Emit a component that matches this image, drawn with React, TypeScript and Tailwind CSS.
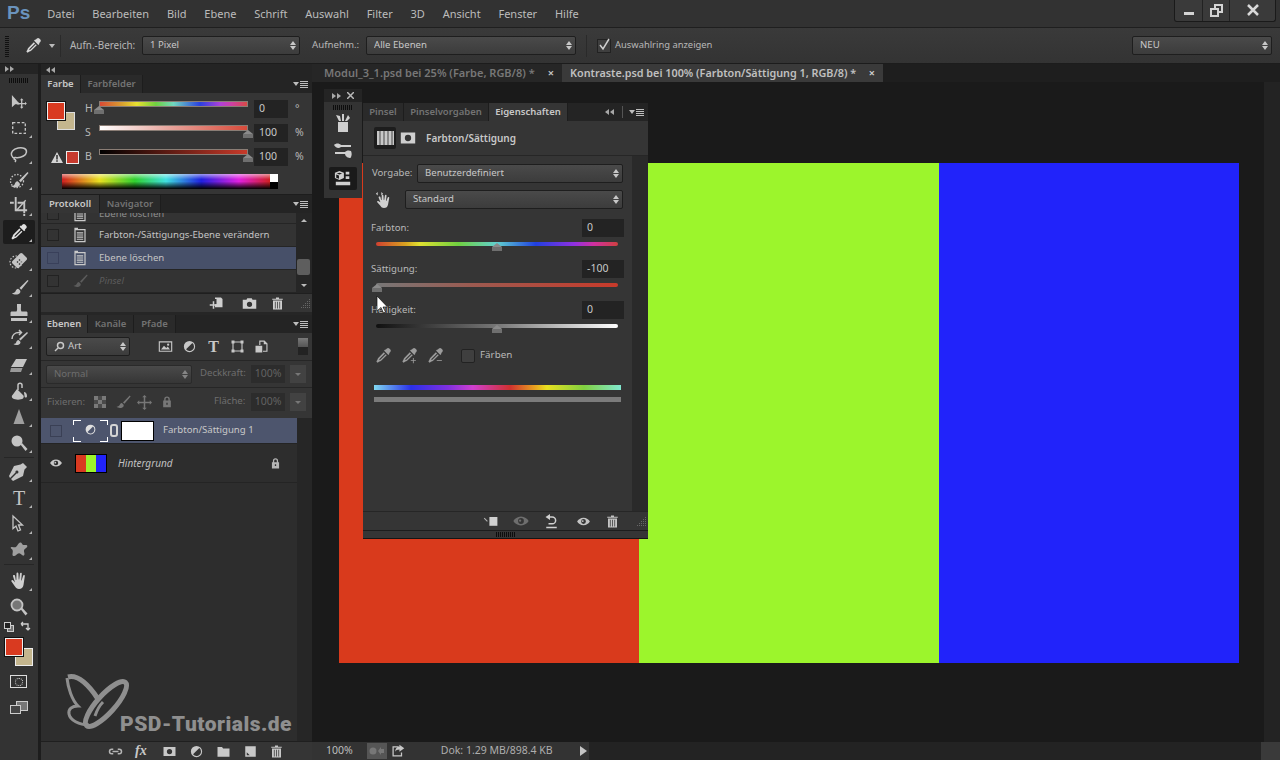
import type { ReactNode } from "react";

const menuItems = ["Datei", "Bearbeiten", "Bild", "Ebene", "Schrift", "Auswahl", "Filter", "3D", "Ansicht", "Fenster", "Hilfe"];

const Icon = ({ size = 20, className = "text-[#c4c4c4]", children }: { size?: number; className?: string; children: ReactNode }) => (
  <svg width={size} height={size} viewBox="0 0 20 20" fill="currentColor" className={`shrink-0 ${className}`}>
    {children}
  </svg>
);

const DropperPath = () => (
  <>
    <path d="M12.5 3.2 14 1.8c.9-.8 2-.8 2.8 0l1.2 1.2c.8.8.8 1.9 0 2.8l-1.5 1.5.6.6-1.4 1.4-5.1-5.1 1.4-1.4z" />
    <path d="M10.4 6.2 3.8 12.8c-.6.6-.8 1.3-.8 2L1.6 17l1.4 1.4 2.2-1.4c.7 0 1.4-.2 2-.8l6.6-6.6-1.1-1.1-6.5 6.5-1.2.3.3-1.2 6.5-6.5z" />
  </>
);
const BrushPath = () => (
  <>
    <path d="M18.5 2 10 10.5l1.8 1.8L19.5 3z" />
    <path d="M8.6 11.2c-1.7.2-2.4 1.4-2.8 2.7-.4 1.1-1.4 1.9-3.8 2.1 1.6 1.7 6.4 2.3 8.4-.2.8-1 .7-2.2-.2-3.1z" />
  </>
);
const TrashPath = () => (
  <path fillRule="evenodd" d="M8 2h4v1.5h5V5H3V3.500h5zM4 6h12v12H4zm2.500 1.500v9h1v-9zm3 0v9h1v-9zm3 0v9h1v-9z" />
);
const EyePath = () => (
  <path fillRule="evenodd" d="M10 5c4 0 7 2.500 8.500 5-1.500 2.500-4.500 5-8.500 5s-7-2.500-8.500-5C3 7.500 6 5 10 5zm0 1.800a3.200 3.200 0 1 0 0 6.400 3.200 3.200 0 0 0 0-6.400zm-1 1.400a1.300 1.300 0 1 1 0 2.600 1.300 1.300 0 0 1 0-2.600z" />
);
const LockPath = () => (
  <path fillRule="evenodd" d="M10 2a4 4 0 0 1 4 4v2h1.500v9.500h-11V8H6V6a4 4 0 0 1 4-4zm0 2a2 2 0 0 0-2 2v2h4V6a2 2 0 0 0-2-2zm-1 7v3h2v-3z" />
);
const AdjustPath = () => (
  <path fillRule="evenodd" d="M10 2.500a7.500 7.500 0 1 1 0 15 7.500 7.500 0 0 1 0-15zm3.800 2.900L5.400 13.800A6 6 0 0 0 16 10a6 6 0 0 0-2.200-4.600z" />
);
const MaskPath = () => <path fillRule="evenodd" d="M2 4h16v12H2zm8 2.500a3.500 3.500 0 1 0 0 7 3.500 3.500 0 0 0 0-7z" />;
const DocPath = () => (
  <path fillRule="evenodd" d="M3 1h4.500v1.500H17V19H3zm1.500 3v13.500h11V4zM6 6.500h8V8H6zm0 2.800h8v1.300H6zm0 2.700h8v1.300H6zm0 2.700h8V16H6z" />
);

const Tool = ({ children, active, corner = true, h = "h-[26px]" }: { children: ReactNode; active?: boolean; corner?: boolean; h?: string }) => (
  <div className={`relative flex w-full items-center justify-center ${h}`}>
    <div className={`flex h-[24px] w-[32px] items-center justify-center rounded-[2px] ${active ? "bg-[#1d1d1d]" : ""}`}>{children}</div>
    {corner && <span className="absolute bottom-[3px] right-[6px] h-0 w-0 border-b-[3px] border-l-[3px] border-b-[#b5b5b5] border-l-transparent" />}
  </div>
);

const Select = ({ label, className, dim, labelClass = "" }: { label: ReactNode; className: string; dim?: boolean; labelClass?: string }) => (
  <div className={`flex h-[19px] items-center justify-between rounded-[2px] border border-[#1e1e1e] bg-gradient-to-b from-[#4a4a4a] to-[#3c3c3c] pl-[7px] pr-[3px] text-[9.600px] ${dim ? "border-[#2a2a2a] from-[#3b3b3b] to-[#363636] text-[#6e6e6e]" : "text-[#c8c8c8]"} ${className}`}>
    <span className={`truncate ${labelClass}`}>{label}</span>
    <span className={`flex flex-col gap-[1px] ${dim ? "opacity-50" : ""}`}>
      <span className="h-0 w-0 border-x-[3px] border-b-[4px] border-x-transparent border-b-[#c8c8c8]" />
      <span className="h-0 w-0 border-x-[3px] border-t-[4px] border-x-transparent border-t-[#c8c8c8]" />
    </span>
  </div>
);

const Tab = ({ label, active, w }: { label: string; active?: boolean; w: string }) => (
  <div className={`flex h-full items-center justify-center border-r border-[#1d1d1d] text-[9.5px] font-semibold ${w} ${active ? "bg-[#353535] text-[#c8c8c8]" : "bg-[#2a2a2a] text-[#737373]"}`}>{label}</div>
);

const PanelMenu = () => (
  <div className="ml-auto flex items-center gap-[1px] pr-[4px]">
    <span className="h-0 w-0 border-x-[3px] border-t-[4px] border-x-transparent border-t-[#bdbdbd]" />
    <span className="flex flex-col gap-[1px]">
      <span className="h-[1px] w-[8px] bg-[#bdbdbd]" />
      <span className="h-[1px] w-[8px] bg-[#bdbdbd]" />
      <span className="h-[1px] w-[8px] bg-[#bdbdbd]" />
      <span className="h-[1px] w-[8px] bg-[#bdbdbd]" />
    </span>
  </div>
);

const Grip = ({ className = "" }: { className?: string }) => (
  <div className={`h-[5px] bg-[repeating-linear-gradient(90deg,#0d0d0d_0_1px,transparent_1px_2px)] ${className}`} />
);

const Corner = () => (
  <svg width="11" height="11" viewBox="0 0 11 11" fill="#666666">
    <rect x="9" y="1" width="1" height="1" />
    <rect x="7" y="3" width="1" height="1" /><rect x="9" y="3" width="1" height="1" />
    <rect x="5" y="5" width="1" height="1" /><rect x="7" y="5" width="1" height="1" /><rect x="9" y="5" width="1" height="1" />
    <rect x="3" y="7" width="1" height="1" /><rect x="5" y="7" width="1" height="1" /><rect x="7" y="7" width="1" height="1" /><rect x="9" y="7" width="1" height="1" />
    <rect x="1" y="9" width="1" height="1" /><rect x="3" y="9" width="1" height="1" /><rect x="5" y="9" width="1" height="1" /><rect x="7" y="9" width="1" height="1" /><rect x="9" y="9" width="1" height="1" />
  </svg>
);

const DoubleArrow = ({ left }: { left?: boolean }) => (
  <span className={`flex gap-[1px] ${left ? "rotate-180" : ""}`}>
    <span className="h-0 w-0 border-y-[3px] border-l-[4px] border-y-transparent border-l-[#a8a8a8]" />
    <span className="h-0 w-0 border-y-[3px] border-l-[4px] border-y-transparent border-l-[#a8a8a8]" />
  </span>
);

const Thumb = ({ className }: { className: string }) => (
  <span className={`absolute top-[6px] flex -translate-x-1/2 flex-col items-center ${className}`}>
    <span className="h-0 w-0 border-x-[5px] border-b-[4px] border-x-transparent border-b-[#8a8a8a]" />
    <span className="h-[4px] w-[10px] bg-[#6f6f6f]" />
  </span>
);

const ValueBox = ({ value, className }: { value: string; className: string }) => (
  <div className={`flex h-[18px] items-center bg-[#232323] pl-[5px] text-[#c8c8c8] ${className}`}>{value}</div>
);

const ColorRow = ({ label, bar, thumb, value, unit }: { label: string; bar: string; thumb: string; value: string; unit: string }) => (
  <div className="flex h-[24px] items-start">
    <span className="mt-[1px] w-[14px] text-[#b8b8b8]">{label}</span>
    <div className="relative h-[18px] w-[149px]">
      <div className={`mt-[1px] h-[6px] w-full border border-[#8a7d75] ${bar}`} />
      <Thumb className={thumb} />
    </div>
    <ValueBox value={value} className="ml-[6px] w-[34px]" />
    <span className="ml-[7px] mt-[1px] text-[#b8b8b8]">{unit}</span>
  </div>
);

const HistoryRow = ({ label, selected, dim, icon }: { label: string; selected?: boolean; dim?: boolean; icon?: ReactNode }) => (
  <div className={`flex h-[23px] items-center border-b border-[#252525] pl-[6px] text-[9.600px] ${selected ? "bg-[#475069]" : ""}`}>
    <span className={`h-[12px] w-[12px] border ${selected ? "border-[#39405a]" : "border-[#222]"}`} />
    <span className="ml-[13px] flex w-[27px]">{icon ?? <Icon size={16} className="text-[#c9c9c9]"><DocPath /></Icon>}</span>
    <span className={dim ? "italic text-[#5b5b5b]" : "text-[#c4c4c4]"}>{label}</span>
  </div>
);

const PropSlider = ({ label, value, bar, thumb }: { label: string; value: string; bar: string; thumb: string }) => (
  <div className="flex flex-col">
    <div className="flex h-[18px] items-center justify-between pl-[8px] pr-[8px]">
      <span className="text-[9.600px] text-[#b8b8b8]">{label}</span>
      <ValueBox value={value} className="w-[42px]" />
    </div>
    <div className="relative ml-[13px] mt-[5px] h-[18px] w-[242px]">
      <div className={`h-[4px] rounded-full ${bar}`} />
      <Thumb className={`!top-[0px] translate-y-[1px] ${thumb}`} />
    </div>
  </div>
);

const App = () => (
  <div className="relative flex h-[760px] w-[1280px] flex-col overflow-hidden bg-[#333333] font-['Noto_Sans',sans-serif] text-[10.5px] text-[#c8c8c8]">
    {/* menu bar */}
    <div className="flex h-[28px] shrink-0 items-center border-b border-[#1f1f1f] bg-[#323232] pl-[7px]">
      <span className="font-['Liberation_Sans',sans-serif] text-[19px] font-bold text-[#6a93bd]">Ps</span>
      <div className="ml-[17px] flex gap-[17.800px] pt-[1px] text-[11px] text-[#bcbcbc]">
        {menuItems.map((m) => (
          <span key={m}>{m}</span>
        ))}
      </div>
      <div className="ml-auto mr-[4px] flex h-[22px] -translate-y-[3px] items-center rounded-b-[3px] border border-t-0 border-[#1a1a1a] bg-[#3a3a3a]">
        <div className="flex h-full w-[28px] items-center justify-center border-r border-[#222]">
          <span className="mt-[6px] h-[3px] w-[10px] bg-[#d4d4d4]" />
        </div>
        <div className="flex h-full w-[27px] items-center justify-center border-r border-[#222]">
          <svg width="13" height="13" viewBox="0 0 13 13" fill="none" stroke="#d4d4d4" strokeWidth="2">
            <rect x="5" y="1" width="7" height="7" />
            <rect x="1" y="5" width="7" height="7" fill="#3a3a3a" />
          </svg>
        </div>
        <div className="flex h-full w-[45px] items-center justify-center">
          <svg width="12" height="12" viewBox="0 0 12 12" stroke="#d8d8d8" strokeWidth="2.500">
            <path d="M1 1l10 10M11 1 1 11" />
          </svg>
        </div>
      </div>
    </div>

    {/* options bar */}
    <div className="flex h-[36px] shrink-0 items-center border-b border-[#1c1c1c] bg-gradient-to-b from-[#3a3a3a] to-[#333333]">
      <div className="ml-[5px] h-[22px] w-[4px] bg-[repeating-linear-gradient(0deg,#111_0_1px,transparent_1px_2px)]" />
      <div className="ml-[16px]">
        <Icon size={17} className="text-[#d6d6d6]"><DropperPath /></Icon>
      </div>
      <span className="ml-[7px] h-0 w-0 border-x-[3px] border-t-[4px] border-x-transparent border-t-[#bbb]" />
      <span className="ml-[5px] h-[22px] w-[1px] bg-[#2a2a2a]" />
      <span className="ml-[9px] w-[72px] text-[9.900px] text-[#b8b8b8]">Aufn.-Bereich:</span>
      <Select label="1 Pixel" className="w-[158px]" />
      <span className="ml-[12px] w-[54px] text-[9.700px] text-[#b8b8b8]">Aufnehm.:</span>
      <Select label="Alle Ebenen" className="w-[210px]" />
      <span className="ml-[10px] h-[22px] w-[1px] bg-[#2a2a2a]" />
      <span className="relative ml-[10px] flex h-[14px] w-[14px] items-center justify-center border border-[#222] bg-[#3f3f3f]">
        <svg width="14" height="14" viewBox="0 0 14 14" fill="none" stroke="#d0d0d0" strokeWidth="1.500" className="absolute -top-[2px]">
          <path d="M3 7l3 4 6-10" />
        </svg>
      </span>
      <span className="ml-[4px] text-[9.400px] text-[#b8b8b8]">Auswahlring anzeigen</span>
      <Select label="NEU" className="ml-auto mr-[8px] w-[140px]" />
    </div>

    {/* main */}
    <div className="flex min-h-0 flex-1">
      {/* toolbar */}
      <div className="flex w-[38px] shrink-0 flex-col bg-[#333333]">
        <div className="flex h-[10px] items-center bg-[#242424] pl-[5px]"><DoubleArrow /></div>
        <Grip className="mx-[9px] mt-[4px]" />
        <div className="mt-[6px] flex flex-col">
          <Tool corner={false} h="h-[26px]">
            <Icon size={19}><path d="M2 2v13l3.500-3.200h5z" /><path d="M14 7l2 2h-1.300v3h3V10.700l2 2-2 2v-1.300h-3v3H16l-2 2-2-2h1.300v-3h-3v1.300l-2-2 2-2V12h3V9H12z" transform="translate(-1 -1) scale(.95)" /></Icon>
          </Tool>
          <Tool>
            <Icon size={18}><rect x="3" y="4" width="14" height="12" fill="none" stroke="currentColor" strokeWidth="1.500" strokeDasharray="3 2" /></Icon>
          </Tool>
          <Tool>
            <Icon size={20}><path fill="none" stroke="currentColor" strokeWidth="1.500" d="M6 14.500C2 13 1.500 9.500 3.500 7 6 4 12 2.800 15.500 4.500c3 1.500 2.500 5.500-1 7.500-2.500 1.400-5.500 2-8 1.500-1.700-.3-2 1.700-.5 2 1 .3.800 1.500 0 2.500" /></Icon>
          </Tool>
          <Tool>
            <Icon size={20}><circle cx="8" cy="11" r="6.500" fill="none" stroke="currentColor" strokeWidth="1.300" strokeDasharray="1.500 1.500" /><BrushPath /></Icon>
          </Tool>
          <Tool>
            <Icon size={19}><path d="M5 0h2v13h11v2H5zM0 5h4v2H0zM8 5h8v12h-2V7H8zM14 18h2v2h-2z" /><path d="M6 14 16 3l1 1L7 15z" /></Icon>
          </Tool>
          <Tool active>
            <Icon size={18} className="text-[#e0e0e0]"><DropperPath /></Icon>
          </Tool>
          <div className="h-[3px]" />
          <Tool>
            <Icon size={20}>
              <circle cx="7" cy="11" r="6" fill="none" stroke="currentColor" strokeWidth="1.200" strokeDasharray="1.500 1.500" />
              <path fillRule="evenodd" d="M13.500 2.500l4 4c.7.700.7 1.800 0 2.500L10 16.500c-.7.700-1.800.700-2.500 0l-4-4c-.7-.7-.7-1.800 0-2.500L11 2.500c.7-.7 1.800-.7 2.500 0zM10.500 8l-1 1 1 1 1-1zm2 2-1 1 1 1 1-1zm-4 0-1 1 1 1 1-1zm2 2-1 1 1 1 1-1z" />
            </Icon>
          </Tool>
          <Tool>
            <Icon size={19}><BrushPath /></Icon>
          </Tool>
          <Tool>
            <Icon size={20}><path d="M8 1h4v2.500c0 2-.5 3 .5 5H17c1 0 1.500.5 1.500 1.500v3h-17v-3c0-1 .5-1.500 1.500-1.500h4.500c1-2 .5-3 .5-5zM2 15h16v3H2z" /></Icon>
          </Tool>
          <Tool>
            <Icon size={20}><path d="M18 3 10 10l1.500 1.500L19 4z" /><path d="M9.500 11c-1.500.3-2 1.300-2.300 2.300-.3 1-1 1.500-2.700 1.700 1.300 1.300 5 1.600 6.500-.3.700-.8.600-1.800-.1-2.500z" /><path fill="none" stroke="currentColor" strokeWidth="1.500" d="M3 10C3 6 6 3.500 10 3.500l2 0M10 1l2.500 2.500L10 6" /></Icon>
          </Tool>
          <Tool>
            <Icon size={20}><path d="M7 4h11l-4 8H2z" /><path d="M2 13h11.500L12 17H1z" opacity=".7" /></Icon>
          </Tool>
          <Tool>
            <Icon size={20}><path d="M8 8l6 6c1 1 1 2 0 3.500-2 1.500-8 1.500-10 0-1.500-1-1.500-2.500-.5-3.500z" /><path fill="none" stroke="currentColor" strokeWidth="1.500" d="M9 9V4c0-2.500 4-2.500 4 0v3" /><path d="M15 11c1.500 0 3 1.500 3 4 0 2-2.500 2-2.500 0 0-1.500-.5-2-.5-4z" /></Icon>
          </Tool>
          <Tool>
            <Icon size={20} className="text-[#9f9f9f]"><path d="M10 2l5.500 15h-11z" /></Icon>
          </Tool>
          <Tool>
            <Icon size={20}><circle cx="8" cy="8" r="5.500" /><path d="M11.500 11.500l1.500-1.500 5.500 6-2 2z" /></Icon>
          </Tool>
          <div className="mx-[4px] my-[1px] h-[1px] bg-[#262626]" />
          <Tool>
            <Icon size={20}><path fillRule="evenodd" d="M14 1l4 4-2.500 2.500-1.500 6.500-10 5-2-2 5.500-5.500a1.500 1.500 0 1 0-1-1L1 16 0 14 5 4l6.500-1.500z" /></Icon>
          </Tool>
          <Tool>
            <span className="font-['Liberation_Serif',serif] text-[20px] leading-none text-[#c4c4c4]">T</span>
          </Tool>
          <Tool>
            <Icon size={20}><path fill="none" stroke="currentColor" strokeWidth="1.300" d="M4 2v12.500l3-2.500 2 5 2.500-1-2-5h4z" /></Icon>
          </Tool>
          <Tool>
            <Icon size={20} className="text-[#9f9f9f]"><path d="M11 2.500c1.800-.5 1.800 2 3.300 2.500s3.700-.8 4 1c.2 1.800-3 2.500-3.300 4.500-.3 1.800 1.500 3.800-.2 5-1.500.8-2.800-2.500-4.800-2.300-2 .2-3.500 3.300-5.500 2.800-2-.6-.3-3.500-.8-5.500S.8 8.500 2 7.300c1.200-1.200 3.200.7 4.800-.2C8.500 6 9.300 3 11 2.500z" /></Icon>
          </Tool>
          <div className="mx-[4px] my-[1px] h-[1px] bg-[#262626]" />
          <div className="h-[2px]" />
          <Tool>
            <Icon size={20} className="text-[#cfcfcf]"><path d="M5 4c.8 0 1 .5 1.100 1l.7 4h.5L7.500 2.500c0-1.200 1.800-1.200 1.900 0l.3 6h.5l.8-6c.2-1 1.900-1 1.800.3l-.6 6.700h.4l1.500-4.800c.4-1 2-.7 1.700.5L14.500 14c-.5 2.500-2 4-4.500 4-2 0-3-1-4-2.500l-3.500-5c-.7-1 .6-2 1.500-1.200L6 11.500 4 5.200C3.800 4.500 4.300 4 5 4z" /></Icon>
          </Tool>
          <Tool corner={false}>
            <Icon size={20}><circle cx="8" cy="8" r="5.500" fill="#777" stroke="currentColor" strokeWidth="1.800" /><path d="M11.500 12l1.500-1.500 5.500 6-2 2z" /></Icon>
          </Tool>
        </div>
        <div className="flex h-[12px] items-center justify-between pl-[4px] pr-[7px] pt-[1px]">
          <span className="relative h-[10px] w-[10px]">
            <span className="absolute left-[3px] top-[3px] h-[7px] w-[7px] border border-[#ccc] bg-[#777]" />
            <span className="absolute left-0 top-0 h-[7px] w-[7px] border border-[#ccc] bg-[#222]" />
          </span>
          <svg width="11" height="11" viewBox="0 0 11 11" fill="none" stroke="#cfcfcf" strokeWidth="1.300"><path d="M1 3h7v6M1 3l2-2M1 3l2 2M8 9l-2-2M8 9l2-2" /></svg>
        </div>
        <div className="relative ml-[5px] mt-[6px] h-[28px] w-[29px]">
          <span className="absolute left-[10px] top-[10px] h-[18px] w-[18px] border border-[#eee] bg-[#c4b68e]" />
          <span className="absolute left-0 top-0 h-[18px] w-[18px] border border-[#eee] bg-[#d93a20] shadow-[0_0_0_1px_#111]" />
        </div>
        <div className="ml-[10px] mt-[9px] flex h-[13px] w-[17px] items-center justify-center border border-[#ddd]">
          <span className="h-[8px] w-[8px] rounded-full border border-dotted border-[#ddd]" />
        </div>
        <div className="relative ml-[10px] mt-[13px] h-[13px] w-[18px]">
          <span className="absolute right-0 top-0 h-[10px] w-[12px] border border-[#ccc] bg-[#777]" />
          <span className="absolute bottom-0 left-0 h-[9px] w-[11px] border border-[#ccc] bg-[#444]" />
        </div>
      </div>

      {/* dark gutter + docked panels */}
      <div className="w-[3px] shrink-0 bg-[#1d1d1d]" />
      <div className="flex w-[271px] shrink-0 flex-col bg-[#262626]">
        <div className="flex h-[11px] items-center bg-[#242424] pl-[5px]"><DoubleArrow left /></div>

        {/* Farbe */}
        <div className="flex h-[18px] items-stretch bg-[#242424]">
          <Tab label="Farbe" active w="w-[40px]" />
          <Tab label="Farbfelder" w="w-[62px]" />
          <PanelMenu />
        </div>
        <div className="h-[102px] border-b border-[#1d1d1d] bg-[#353535]">
          <div className="flex pt-[7px]">
            <div className="flex w-[44px] flex-col pl-[6px] pt-[2px]">
              <div className="relative h-[28px] w-[28px]">
                <span className="absolute bottom-0 right-0 h-[18px] w-[18px] border border-[#ddd] bg-[#c4b68e]" />
                <span className="absolute left-0 top-0 h-[18px] w-[18px] border border-[#eee] bg-[#d93a20] shadow-[0_0_0_1px_#111]" />
              </div>
              <div className="mt-[21px] flex items-center gap-[3px] pl-[4px]">
                <svg width="12" height="11" viewBox="0 0 12 11"><path d="M6 0l6 11H0z" fill="#d4d4d4" /><path d="M5.300 3h1.400v4.500H5.300zM5.300 8.300h1.400v1.400H5.300z" fill="#222" /></svg>
                <span className="h-[13px] w-[13px] border border-[#eee] bg-[#c73a2e]" />
              </div>
            </div>
            <div className="flex flex-col">
              <ColorRow label="H" value="0" unit="°" thumb="left-[0px]" bar="bg-[linear-gradient(90deg,#d94a35,#d9a030_15%,#e8e030_25%,#70d040_38%,#70d8c0_50%,#2a40e0_68%,#b040d8_82%,#d040a0_90%,#d94a45)]" />
              <ColorRow label="S" value="100" unit="%" thumb="left-[149px]" bar="bg-[linear-gradient(90deg,#ffffff,#e8a8a0_45%,#d84a3a)]" />
              <ColorRow label="B" value="100" unit="%" thumb="left-[149px]" bar="bg-[linear-gradient(90deg,#000000,#5a1a12_45%,#c83a2a)]" />
            </div>
          </div>
          <div className="ml-[21px] mt-[2px] flex h-[15px] w-[216px]">
            <div className="relative h-full w-[208px] bg-[linear-gradient(90deg,#d02020,#e8e020_18%,#30d030_35%,#40e0e0_50%,#2020e0_67%,#e020e0_85%,#d02020)]">
              <div className="absolute inset-0 bg-[linear-gradient(180deg,rgba(255,255,255,.55),rgba(255,255,255,0)_35%,rgba(0,0,0,0)_50%,rgba(0,0,0,1))]" />
            </div>
            <div className="flex w-[8px] flex-col">
              <span className="h-1/2 bg-white" />
              <span className="h-1/2 bg-black" />
            </div>
          </div>
        </div>

        {/* Protokoll */}
        <div className="flex h-[18px] shrink-0 items-stretch bg-[#242424]">
          <Tab label="Protokoll" active w="w-[59px]" />
          <Tab label="Navigator" w="w-[61px]" />
          <PanelMenu />
        </div>
        <div className="flex h-[80px] overflow-hidden bg-[#333333]">
          <div className="flex min-w-0 flex-1 flex-col justify-end">
            <div className="relative h-[11px] shrink-0 overflow-hidden border-b border-[#252525] pl-[6px]">
              <div className="absolute bottom-[1px] left-[6px] flex items-center text-[9.600px]">
                <span className="h-[12px] w-[12px] border border-[#222]" />
                <span className="ml-[13px] flex w-[27px]"><Icon size={16} className="text-[#c9c9c9]"><DocPath /></Icon></span>
                <span className="text-[#8d8d8d]">Ebene löschen</span>
              </div>
            </div>
            <HistoryRow label="Farbton-/Sättigungs-Ebene verändern" />
            <HistoryRow label="Ebene löschen" selected />
            <HistoryRow label="Pinsel" dim icon={<Icon size={16} className="text-[#5c5c5c]"><BrushPath /></Icon>} />
          </div>
          <div className="relative flex w-[16px] shrink-0 flex-col items-center justify-between bg-[#262626] py-[6px]">
            <span className="h-0 w-0 border-x-[3px] border-b-[3px] border-x-transparent border-b-[#bbb]" />
            <span className="absolute left-[1px] top-[46px] h-[16px] w-[13px] rounded-[2px] bg-[#5e5e5e]" />
            <span className="h-0 w-0 border-x-[3px] border-t-[3px] border-x-transparent border-t-[#bbb]" />
          </div>
        </div>
        <div className="flex h-[19px] shrink-0 items-center justify-end border-t border-[#1f1f1f] bg-[#353535]">
          <Icon size={15} className="mr-[18px] text-[#cfcfcf]"><path d="M8 2h8l2 2v11H8v-4h2V4H8z" /><path d="M1 11h4V7h2v4h4v2H7v4H5v-4H1z" /></Icon>
          <Icon size={15} className="mr-[13px] text-[#cfcfcf]"><path fillRule="evenodd" d="M1 5h5l1-2h6l1 2h5v12H1zm9 2.500a3.500 3.500 0 1 0 0 7 3.500 3.500 0 0 0 0-7z" /></Icon>
          <Icon size={15} className="mr-[15px] text-[#cfcfcf]"><TrashPath /></Icon>
          <Corner />
          <div className="w-[1px]" />
        </div>

        {/* Ebenen */}
        <div className="mt-[3px] flex h-[18px] shrink-0 items-stretch bg-[#242424]">
          <Tab label="Ebenen" active w="w-[47px]" />
          <Tab label="Kanäle" w="w-[46px]" />
          <Tab label="Pfade" w="w-[42px]" />
          <PanelMenu />
        </div>
        <div className="flex min-h-0 flex-1 flex-col bg-[#353535]">
          <div className="flex h-[28px] shrink-0 items-center border-b border-[#262626] pl-[5px]">
            <Select label={<span className="flex items-center gap-[3px]"><svg width="11" height="11" viewBox="0 0 11 11" fill="none" stroke="#c8c8c8" strokeWidth="1.500"><circle cx="6.500" cy="4.500" r="3" /><path d="M4 7 1 10" /></svg>Art</span>} className="w-[84px]" />
            <Icon size={15} className="ml-[28px] text-[#c8c8c8]"><path fillRule="evenodd" d="M1 3h18v14H1zm1.500 1.500v11h15v-11zM4 14l4-5 3 3 2-2 3 4zM13.500 6a1.500 1.500 0 1 1 0 3 1.500 1.500 0 0 1 0-3z" /></Icon>
            <Icon size={15} className="ml-[9px] text-[#c8c8c8]"><AdjustPath /></Icon>
            <span className="ml-[9px] flex w-[15px] justify-center font-['Liberation_Serif',serif] text-[16px] font-bold leading-none text-[#c8c8c8]">T</span>
            <Icon size={15} className="ml-[9px] text-[#c8c8c8]"><path fill="none" stroke="currentColor" strokeWidth="1.500" d="M4 4h12v12H4z" /><path d="M2 2h4v4H2zM14 2h4v4h-4zM2 14h4v4H2zM14 14h4v4h-4z" /></Icon>
            <Icon size={15} className="ml-[9px] text-[#c8c8c8]"><path fillRule="evenodd" d="M7 2h7l4 4v11h-6v-1.500h4.500V7H13V3.500H8.500V8H7z" /><path d="M2 9h9v9H2z" /></Icon>
            <div className="ml-[29px] flex h-[17px] w-[10px] flex-col">
              <span className="h-1/2 bg-gradient-to-b from-[#7a7a7a] to-[#555]" />
              <span className="h-1/2 bg-[#232323]" />
            </div>
          </div>
          <div className="flex h-[27px] shrink-0 items-center border-b border-[#262626] pl-[5px]">
            <Select dim label="Normal" className="w-[146px]" />
            <span className="ml-[8px] w-[51px] -translate-y-[1px] text-[9.600px] text-[#6e6e6e]">Deckkraft:</span>
            <div className="flex h-[18px] w-[34px] items-center justify-center bg-[#2c2c2c] text-[#626262]">100%</div>
            <div className="ml-[5px] flex h-[18px] w-[16px] items-center justify-center bg-[#424242]"><span className="h-0 w-0 border-x-[3px] border-t-[3px] border-x-transparent border-t-[#777]" /></div>
          </div>
          <div className="flex h-[30px] shrink-0 items-center pb-[2px] pl-[6px]">
            <span className="w-[45px] text-[9.600px] text-[#6e6e6e]">Fixieren:</span>
            <span className="ml-[2px] grid h-[12px] w-[12px] grid-cols-3 grid-rows-3 bg-[#4a4a4a]">
              <span className="bg-[#7a7a7a]" /><span /><span className="bg-[#7a7a7a]" /><span /><span className="bg-[#7a7a7a]" /><span /><span className="bg-[#7a7a7a]" /><span /><span className="bg-[#7a7a7a]" />
            </span>
            <Icon size={16} className="ml-[9px] text-[#777]"><BrushPath /></Icon>
            <Icon size={15} className="ml-[6px] text-[#777]"><path d="M10 0l3 3h-2v6h6V7l3 3-3 3v-2h-6v6h2l-3 3-3-3h2v-6H3v2l-3-3 3-3v2h6V3H7z" /></Icon>
            <Icon size={14} className="ml-[8px] text-[#777]"><LockPath /></Icon>
            <span className="ml-[40px] w-[37px] -translate-y-[1px] text-[9.600px] text-[#6e6e6e]">Fläche:</span>
            <div className="flex h-[18px] w-[34px] items-center justify-center bg-[#2c2c2c] text-[#626262]">100%</div>
            <div className="ml-[5px] flex h-[18px] w-[16px] items-center justify-center bg-[#424242]"><span className="h-0 w-0 border-x-[3px] border-t-[3px] border-x-transparent border-t-[#777]" /></div>
          </div>

          <div className="relative flex min-h-0 flex-1">
            <div className="min-w-0 flex-1 bg-[#2d2d2d]">
              <div className="flex h-[25px] items-center bg-[#4d556d]">
                <div className="flex w-[30px] justify-center">
                  <span className="h-[12px] w-[12px] border border-[#3a4055]" />
                </div>
                <div className="relative ml-[2px] flex h-[22px] w-[35px] items-center justify-center">
                  <span className="absolute left-0 top-0 h-[5px] w-[8px] border-l border-t border-white" />
                  <span className="absolute right-0 top-0 h-[5px] w-[8px] border-r border-t border-white" />
                  <span className="absolute bottom-0 left-0 h-[5px] w-[8px] border-b border-l border-white" />
                  <span className="absolute bottom-0 right-0 h-[5px] w-[8px] border-b border-r border-white" />
                  <Icon size={13} className="-translate-y-[1px] text-[#dfdfdf]"><AdjustPath /></Icon>
                </div>
                <span className="ml-[2px] h-[13px] w-[8px] rounded-[3px] border-2 border-[#d4d4d4] bg-[#4d556d]" />
                <span className="ml-[3px] h-[20px] w-[33px] border border-black bg-white" />
                <span className="ml-[9px] text-[9.600px] text-[#c8c8c8]">Farbton/Sättigung 1</span>
              </div>
              <div className="flex h-[40px] items-center border-y border-[#242424]">
                <div className="flex w-[30px] justify-center">
                  <Icon size={14} className="text-[#c8c8c8]"><EyePath /></Icon>
                </div>
                <div className="ml-[4px] flex h-[19px] w-[32px] border border-black">
                  <span className="flex-1 bg-[#d93a20]" />
                  <span className="flex-1 bg-[#9cf52c]" />
                  <span className="flex-1 bg-[#2123fa]" />
                </div>
                <span className="ml-[11px] text-[10px] italic text-[#c0c0c0]">Hintergrund</span>
                <Icon size={13} className="ml-auto mr-[15px] text-[#b5b5b5]"><LockPath /></Icon>
              </div>
            </div>
            <div className="w-[15px] shrink-0 bg-[#262626]" />
            {/* watermark */}
            <div className="absolute bottom-[9px] left-[24px] flex items-end">
              <svg width="66" height="58" viewBox="0 0 66 58" fill="none" stroke="#8f8f8f">
                <path strokeWidth="5" d="M3 3c8-2 18 4 30 22" />
                <path strokeWidth="3" d="M2 4c1 10 5 22 11 28-6 0-10 3-9 8 1 6 10 11 20 11" />
                <ellipse cx="41" cy="30" rx="9" ry="29" strokeWidth="5" transform="rotate(42 41 30)" />
                <path strokeWidth="3" d="M30 42c2-6 4-10 8-14" />
              </svg>
            </div>
            <span className="absolute bottom-[6px] left-[79px] font-['Roboto',sans-serif] text-[21px] font-black leading-[22px] tracking-[0.5px] text-[#8f8f8f]">PSD-Tutorials.de</span>
          </div>

          <div className="flex h-[19px] shrink-0 items-center border-t border-[#1f1f1f] bg-[#353535] pl-[67px]">
            <Icon size={15} className="text-[#b5b5b5]"><path fill="none" stroke="currentColor" strokeWidth="2" d="M7 7H5a3 3 0 0 0 0 6h2m6-6h2a3 3 0 0 1 0 6h-2M6 10h8" /></Icon>
            <span className="ml-[12px] w-[16px] font-['Liberation_Serif',serif] text-[14px] font-bold italic leading-none text-[#c8c8c8]">fx</span>
            <Icon size={15} className="ml-[11px] text-[#c8c8c8]"><MaskPath /></Icon>
            <Icon size={15} className="ml-[12px] text-[#c8c8c8]"><AdjustPath /></Icon>
            <Icon size={15} className="ml-[12px] text-[#c8c8c8]"><path d="M2 4h6l1.500 2H18v11H2z" /></Icon>
            <Icon size={15} className="ml-[12px] text-[#c8c8c8]"><path d="M3 3h14v14H3zm2 8v4h4z" fillRule="evenodd" /></Icon>
            <Icon size={15} className="ml-[11px] text-[#c8c8c8]"><TrashPath /></Icon>
          </div>
        </div>
      </div>

      {/* document area */}
      <div className="flex min-w-0 flex-1 flex-col bg-[#1a1a1a]">
        <div className="flex h-[18px] shrink-0 items-stretch bg-[#1e1e1e]">
          <div className="flex w-[250px] items-center bg-[#262626] pl-[12px] text-[11px] font-semibold text-[#777777]">
            <span>Modul_3_1.psd bei 25% (Farbe, RGB/8) *</span>
            <span className="ml-auto mr-[8px] text-[#c4c4c4]">×</span>
          </div>
          <div className="flex w-[321px] items-center bg-[#3a3a3a] pl-[8px] text-[10.800px] font-semibold text-[#c0c0c0]">
            <span>Kontraste.psd bei 100% (Farbton/Sättigung 1, RGB/8) *</span>
            <span className="ml-auto mr-[8px] text-[#d0d0d0]">×</span>
          </div>
        </div>
        <div className="flex min-h-0 flex-1">
          <div className="min-w-0 flex-1 pl-[27px] pt-[81px]">
            <div className="flex h-[500px] w-[900px]">
              <div className="flex-1 bg-[#d93a1c]" />
              <div className="flex-1 bg-[#9cf52c]" />
              <div className="flex-1 bg-[#2123fa]" />
            </div>
          </div>
          <div className="w-[16px] shrink-0 bg-[#232323]" />
        </div>
        <div className="flex h-[18px] shrink-0 items-center bg-[#232323]">
          <div className="flex h-full w-[277px] items-center bg-[#333333] pl-[14px]">
            <span className="text-[#bdbdbd]">100%</span>
            <span className="ml-[14px] flex h-[16px] w-[20px] items-center justify-center bg-[#555] text-[#777]">
              <svg width="16" height="10" viewBox="0 0 16 10" fill="currentColor"><circle cx="4" cy="5" r="3.500" /><path d="M9 5l3-4v2h3v4h-3v2z" /></svg>
            </span>
            <Icon size={14} className="ml-[4px] text-[#c8c8c8]"><path fill="none" stroke="currentColor" strokeWidth="1.800" d="M11 4H3v13h12v-5" /><path d="M12 1l7 5-7 5V8c-3 0-5 1-6 3 0-4 2-7 6-7z" /></Icon>
            <span className="ml-[36px] text-[#aeaeae]">Dok: 1.29 MB/898.4 KB</span>
            <span className="ml-auto mr-[2px] h-0 w-0 border-y-[5px] border-l-[7px] border-y-transparent border-l-[#c4c4c4]" />
          </div>
          <div className="ml-auto h-full w-[19px] bg-[#3a3a3a]" />
        </div>
      </div>
    </div>

    {/* floating collapsed dock */}
    <div className="absolute left-[324px] top-[89px] flex h-[109px] w-[38px] flex-col items-center bg-[#333333]">
      <div className="flex h-[13px] w-full items-center justify-between bg-[#242424] px-[8px]">
        <DoubleArrow />
        <svg width="7" height="7" viewBox="0 0 7 7" stroke="#b8b8b8" strokeWidth="1.500"><path d="M0 0l7 7M7 0 0 7" /></svg>
      </div>
      <Grip className="mt-[3px] w-[20px]" />
      <Icon size={20} className="mt-[3px] text-[#cfcfcf]"><path d="M5 9h10v10H5z" /><path d="M6 8 3 2l4 1 1 5zM9 8V1h2v7zM12 8l3-6 2 3-3 3z" /></Icon>
      <Icon size={20} className="mt-[8px] text-[#cfcfcf]"><path d="M1 4c2-2 5-2 7 0h10v2H8c-2 1.500-5 1.500-7-2zM2 11h10c1-1.500 4-2 6-1 1 2 1 5-.5 7-2 0-5-1-5.500-4H2z" /></Icon>
      <div className="mt-[6px] flex h-[23px] w-[28px] items-center justify-center rounded-[2px] bg-[#1a1a1a]">
        <Icon size={18} className="text-[#cfcfcf]"><path fillRule="evenodd" d="M6 1l5 2v6l-5 2-5-2V3zM6 3 3 4l3 1 3-1zM5.500 6 2.500 5v3.500l3 1.200z" /><path d="M13 2h4v3h-4zM13 7h4v3h-4zM2 13h16v4H2z" /></Icon>
      </div>
    </div>

    {/* floating properties panel */}
    <div className="absolute left-[363px] top-[103px] flex h-[436px] w-[285px] flex-col border-b border-[#151515] bg-[#353535]">
      <div className="flex h-[18px] shrink-0 items-stretch bg-[#242424]">
        <Tab label="Pinsel" w="w-[41px]" />
        <Tab label="Pinselvorgaben" w="w-[85px]" />
        <Tab label="Eigenschaften" active w="w-[79px]" />
        <div className="ml-auto flex items-center">
          <DoubleArrow left />
          <span className="ml-[8px] mr-[6px] h-[12px] w-[1px] bg-[#555]" />
          <PanelMenu />
        </div>
      </div>
      <div className="flex h-[35px] shrink-0 items-center border-b border-[#262626] pl-[11px]">
        <span className="flex h-[22px] w-[22px] items-center justify-center rounded-[2px] bg-[#1d1d1d]">
          <span className="h-[14px] w-[17px] bg-[repeating-linear-gradient(90deg,#c8c8c8_0_2px,#888_2px_4px)]" />
        </span>
        <Icon size={18} className="ml-[3px] text-[#cfcfcf]"><MaskPath /></Icon>
        <span className="ml-[9px] text-[10px] font-semibold text-[#c8c8c8]">Farbton/Sättigung</span>
      </div>
      <div className="flex min-h-0 flex-1">
        <div className="min-w-0 flex-1 pt-[8px]">
          <div className="flex items-center pl-[9px]">
            <span className="w-[45px] text-[9.600px] text-[#b8b8b8]">Vorgabe:</span>
            <Select label="Benutzerdefiniert" className="w-[206px]" />
          </div>
          <div className="mt-[7px] flex items-center">
            <div className="flex w-[42px] justify-center">
              <Icon size={18} className="text-[#d0d0d0]"><path d="M5 6c.8 0 1 .5 1.100 1l.7 3h.5L7.500 5c0-1.200 1.800-1.200 1.900 0l.3 5h.5l.8-5c.2-1 1.900-1 1.800.3l-.6 5.700h.4l1.500-3.800c.4-1 2-.7 1.700.5L14.500 15c-.5 2.500-2 4-4.500 4-2 0-3-1-4-2.500l-3.500-4c-.7-1 .6-2 1.500-1.200L6 12.500 4 7.200C3.800 6.500 4.300 6 5 6zM3 1v4L1 3zM7 1v4l2-2z" /></Icon>
            </div>
            <Select label="Standard" className="w-[218px]" />
          </div>
          <div className="mt-[10px] flex flex-col">
            <PropSlider label="Farbton:" value="0" thumb="left-[121px]" bar="bg-[linear-gradient(90deg,#d04030,#d8a020_12%,#e0e030_18%,#70d040_34%,#60d0d0_50%,#2040e0_66%,#9030e0_82%,#d030a0_90%,#d04040)]" />
            <PropSlider label="Sättigung:" value="-100" thumb="left-[1px]" bar="bg-[linear-gradient(90deg,#777777,#9c5a50_40%,#c83a2a)]" />
            <PropSlider label="Helligkeit:" value="0" thumb="left-[121px]" bar="bg-[linear-gradient(90deg,#101010,#777777_50%,#ffffff)]" />
          </div>
          <div className="mt-[5px] flex items-center pl-[12px]">
            <Icon size={17} className="text-[#9c9c9c]"><DropperPath /></Icon>
            <Icon size={17} className="ml-[9px] text-[#9c9c9c]"><DropperPath /><path d="M14 13v2.500h-2.500v1H14V19h1v-2.500h2.500v-1H15V13z" /></Icon>
            <Icon size={17} className="ml-[9px] text-[#9c9c9c]"><DropperPath /><path d="M11.500 15.500h6v1h-6z" /></Icon>
            <span className="ml-[17px] h-[14px] w-[14px] rounded-[2px] border border-[#222] bg-[#3f3f3f]" />
            <span className="ml-[5px] text-[9.800px] text-[#b8b8b8]">Färben</span>
          </div>
          <div className="ml-[11px] mt-[21px] h-[5px] w-[247px] bg-[linear-gradient(90deg,#80d8f0,#2a30e8_15%,#8030e0_30%,#d040d0_40%,#d03030_55%,#e8a020_65%,#e8e020_70%,#80d040_85%,#80e8d0)]" />
          <div className="ml-[11px] mt-[7px] h-[5px] w-[247px] bg-[#7b7b7b]" />
        </div>
        <div className="w-[16px] shrink-0 bg-[#2a2a2a]" />
      </div>
      <div className="flex h-[19px] shrink-0 items-center border-t border-[#262626] pl-[120px]">
        <Icon size={16} className="text-[#d0d0d0]"><path d="M8 5h10v11H8z" /><path d="M2 6l4 4-1 1-4-4zM6 6 2 14" opacity=".8" /></Icon>
        <Icon size={18} className="ml-[13px] text-[#6e6e6e]"><EyePath /></Icon>
        <Icon size={15} className="ml-[14px] text-[#d0d0d0]"><path fill="none" stroke="currentColor" strokeWidth="2" d="M6 4h5a4.500 4.500 0 0 1 0 9H6" /><path d="M8 0v8L2 4zM3 17h14v2H3z" /></Icon>
        <Icon size={15} className="ml-[17px] text-[#c4c4c4]"><EyePath /></Icon>
        <Icon size={15} className="ml-[14px] text-[#c4c4c4]"><TrashPath /></Icon>
        <div className="ml-auto flex pr-[1px]"><Corner /></div>
      </div>
      <div className="flex h-[8px] shrink-0 items-center justify-center border-t border-[#1d1d1d]">
        <Grip className="w-[20px]" />
      </div>
    </div>

    {/* mouse cursor */}
    <svg className="absolute left-[376px] top-[295px]" width="12" height="19" viewBox="0 0 12 19">
      <path d="M1 1v15l4-3.500 2.500 5.500 2-1-2.500-5h4.500z" fill="#ffffff" stroke="#111" strokeWidth=".7" />
    </svg>
  </div>
);

export default App;
